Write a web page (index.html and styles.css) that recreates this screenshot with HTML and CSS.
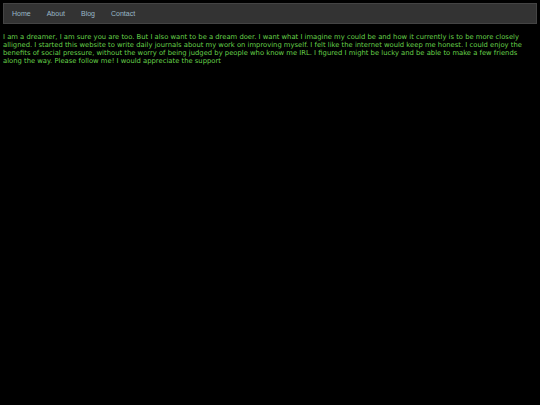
FILE: index.html
```html
<!DOCTYPE html>
<html>
<head>
<meta charset="utf-8">
<link rel="stylesheet" href="styles.css">
</head>
<body>
<nav class="nav">
  <a class="nav-link">Home</a>
  <a class="nav-link">About</a>
  <a class="nav-link">Blog</a>
  <a class="nav-link">Contact</a>
</nav>
<p class="intro">I am a dreamer, I am sure you are too. But I also want to be a dream doer. I want what I imagine my could be and how it currently is to be more closely alligned. I started this website to write daily journals about my work on improving myself. I felt like the internet would keep me honest. I could enjoy the benefits of social pressure, without the worry of being judged by people who know me IRL. I figured I might be lucky and be able to make a few friends along the way. Please follow me! I would appreciate the support</p>
</body>
</html>
```
FILE: styles.css
```css
html, body {
  margin: 0;
  padding: 0;
  background: #000;
}
body {
  padding: 3px;
}
.nav {
  display: flex;
  align-items: center;
  height: 19px;
  background: #333;
  border: 1px solid #444;
}
.nav-link {
  font-family: "Liberation Sans", Arial, sans-serif;
  font-size: 7px;
  color: #9ab8c8;
  text-decoration: none;
  padding: 0 8px;
  cursor: pointer;
}
.intro {
  margin: 9px 0 0 0;
  font-family: Verdana, "DejaVu Sans", sans-serif;
  font-size: 6.8px;
  line-height: 8px;
  color: #66d24a;
}
```
